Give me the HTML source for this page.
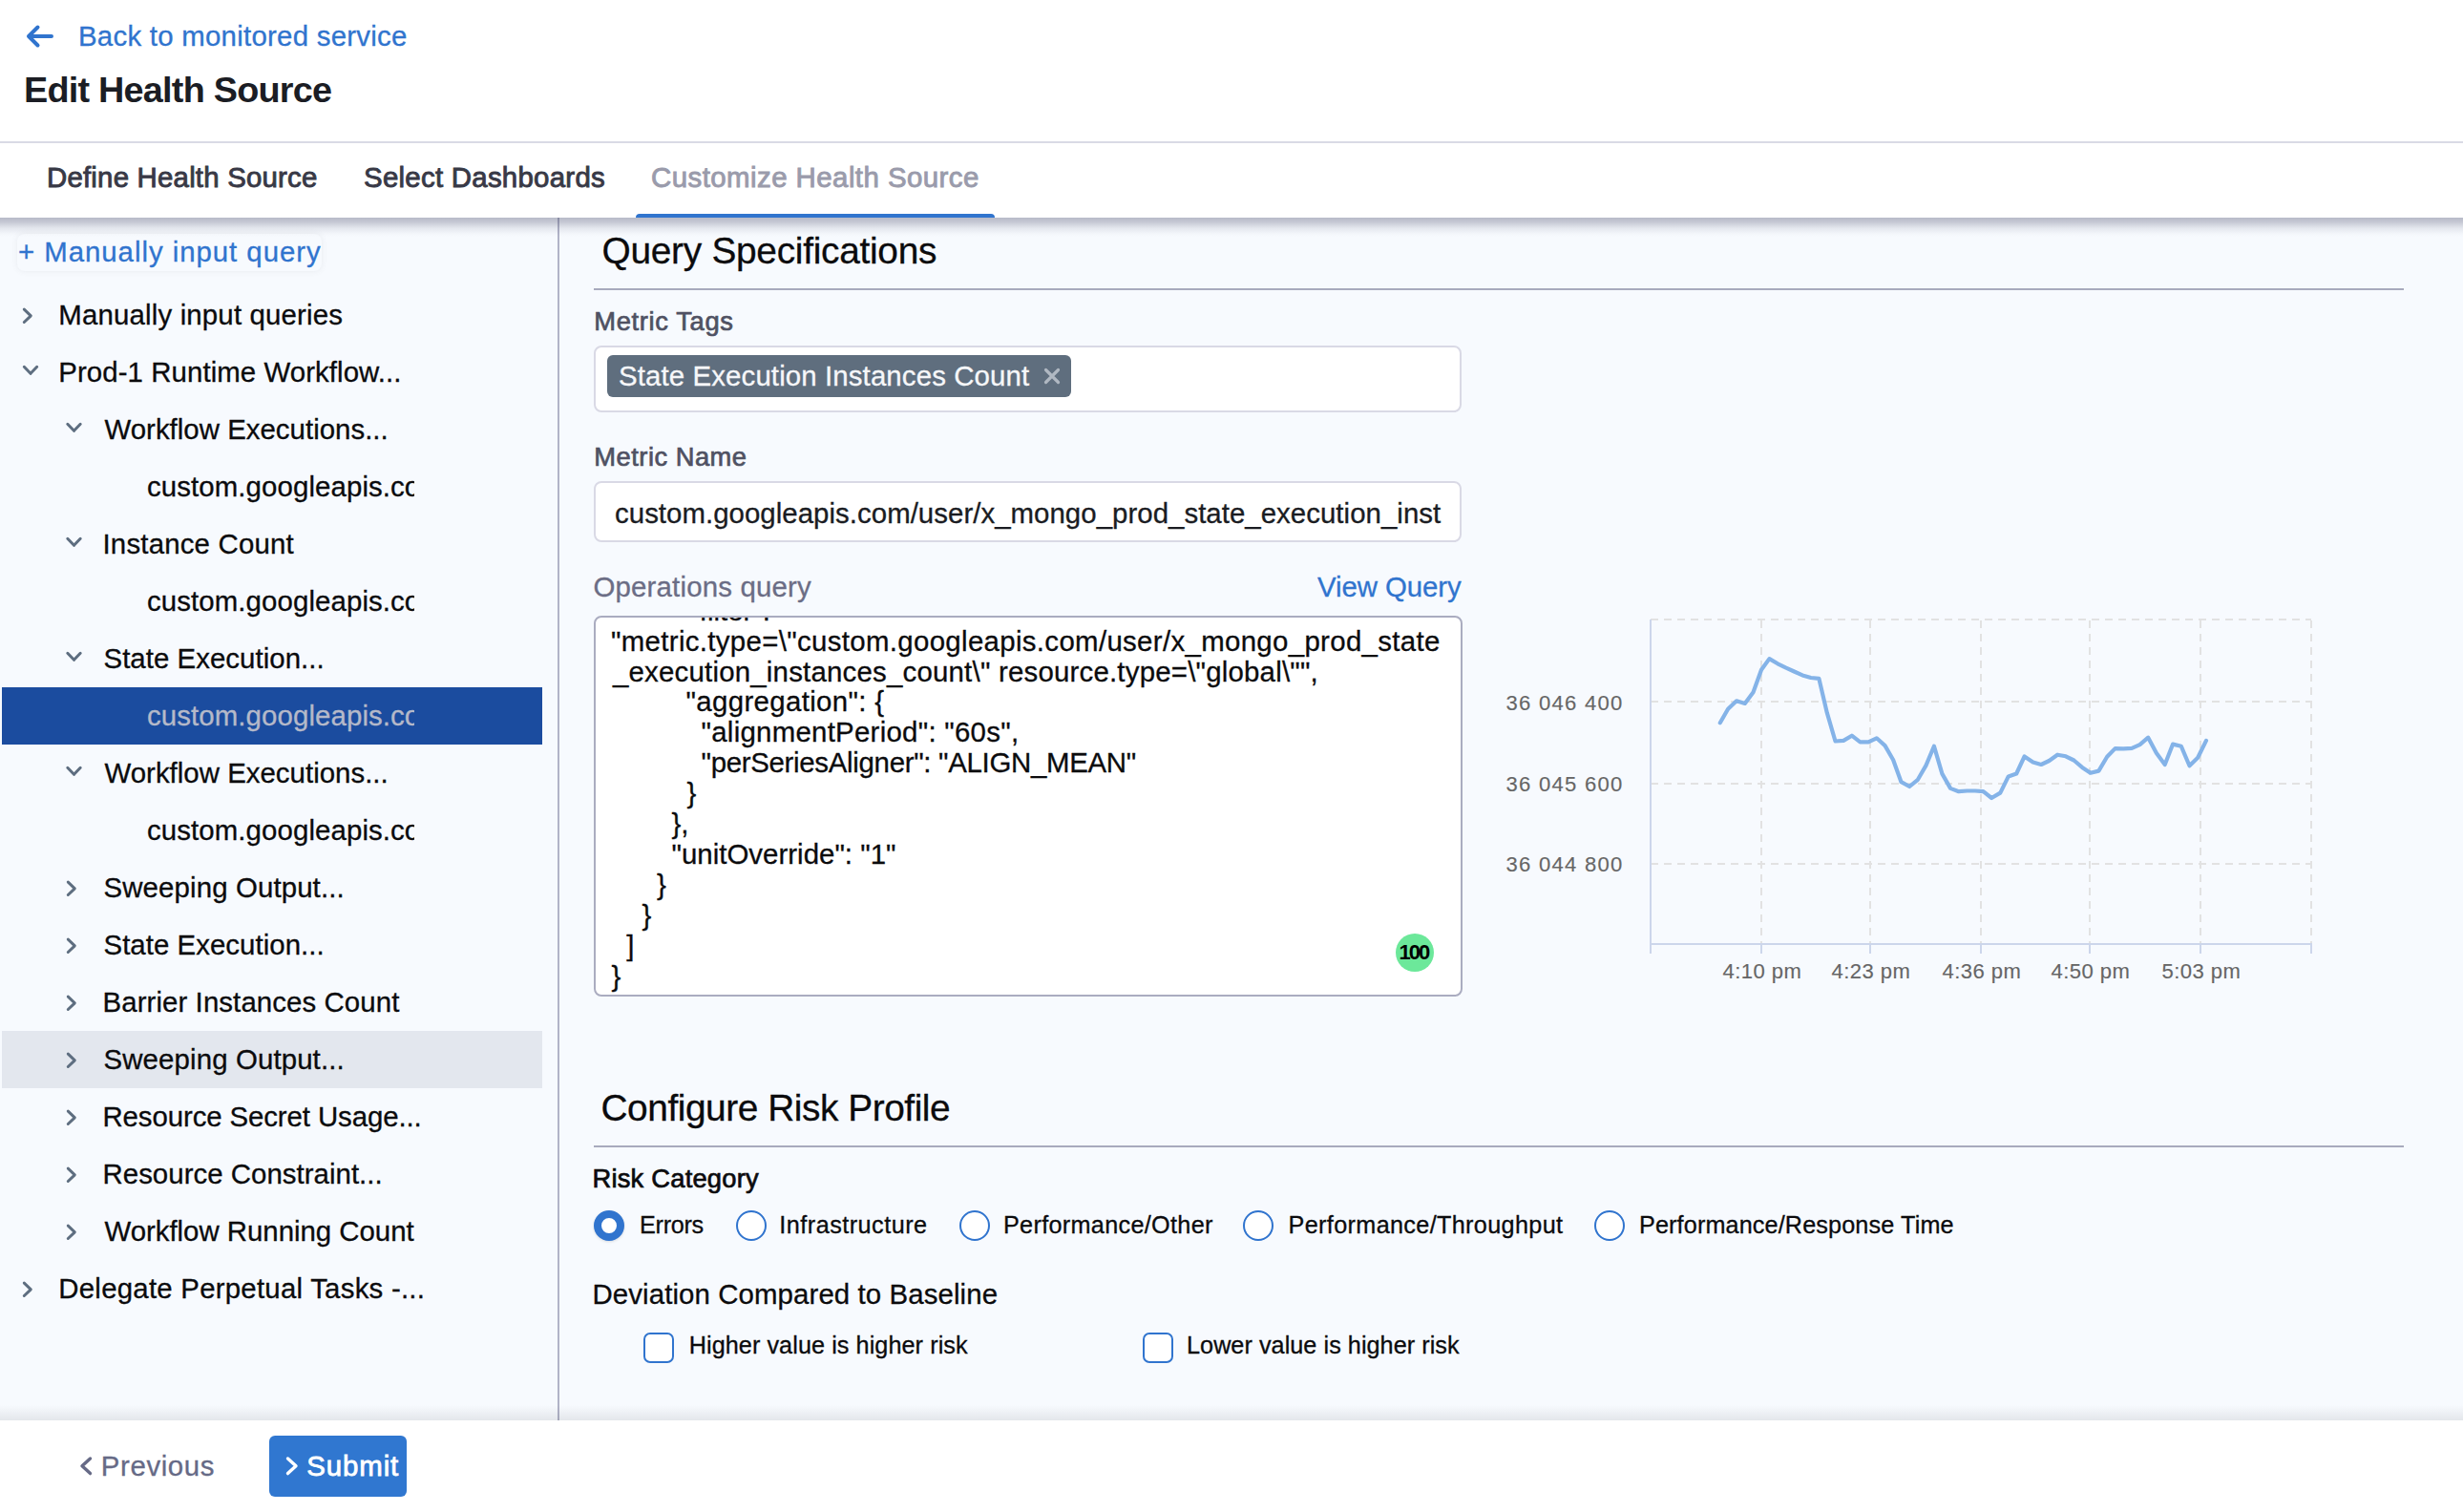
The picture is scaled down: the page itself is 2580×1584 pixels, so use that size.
<!DOCTYPE html>
<html><head><meta charset="utf-8"><title>Edit Health Source</title>
<style>
html,body{margin:0;padding:0;width:2580px;height:1584px;overflow:hidden;background:#fff;}
body{position:relative;font-family:"Liberation Sans", sans-serif;}
.t{position:absolute;white-space:pre;font-family:"Liberation Sans", sans-serif;}
</style></head><body>
<div style="position:absolute;left:0px;top:0px;width:2580px;height:228px;background:#ffffff;"></div>
<div style="position:absolute;left:0px;top:228px;width:2580px;height:1260px;background:#f7fafe;"></div>
<div style="position:absolute;left:0px;top:1488px;width:2580px;height:96px;background:#ffffff;"></div>
<div style="position:absolute;left:0px;top:148px;width:2580px;height:2px;background:#d9dae5;"></div>
<div style="position:absolute;left:2px;top:720px;width:566px;height:60px;background:#1b4c9f;"></div>
<div style="position:absolute;left:2px;top:1080px;width:566px;height:60px;background:#e3e7ee;"></div>
<div style="position:absolute;left:18px;top:245px;width:319px;height:39px;border-radius:8px;box-shadow:0 0 6px rgba(96,97,112,0.10);"></div>
<div style="position:absolute;left:584px;top:228px;width:2px;height:1260px;background:#b1b3c7;"></div>
<div style="position:absolute;left:0px;top:228px;width:2580px;height:20px;background:linear-gradient(rgba(60,62,95,0.34),rgba(60,62,95,0.27) 22%,rgba(60,62,95,0.10) 55%,rgba(60,62,95,0.02) 85%,rgba(60,62,95,0));"></div>
<div style="position:absolute;left:0px;top:1472px;width:2580px;height:16px;background:linear-gradient(rgba(30,32,40,0),rgba(30,32,40,0.04) 45%,rgba(30,32,40,0.09));"></div>
<div style="position:absolute;left:666px;top:224px;width:376px;height:4px;background:#3074ce;border-radius:4px 4px 0 0;"></div>
<div style="position:absolute;left:622px;top:302px;width:1896px;height:2px;background:#a8aabd;"></div>
<div style="position:absolute;left:622px;top:1200px;width:1896px;height:2px;background:#a8aabd;"></div>
<div style="position:absolute;left:622px;top:362px;width:909px;height:69.5px;box-sizing:border-box;background:#fff;border:2px solid #d9d9e5;border-radius:8px;"></div>
<div style="position:absolute;left:636px;top:372px;width:486px;height:44px;background:#5f6e7e;border-radius:6px;"></div>
<div style="position:absolute;left:622px;top:504px;width:909px;height:63.5px;box-sizing:border-box;background:#fff;border:2px solid #d9d9e5;border-radius:8px;"></div>
<div style="position:absolute;left:622px;top:645px;width:910px;height:398.5px;box-sizing:border-box;background:#fff;border:2px solid #aaacc0;border-radius:8px;"></div>
<div style="position:absolute;left:1462px;top:978px;width:40px;height:40px;background:#6ce89a;border-radius:50%;"></div>
<div style="position:absolute;left:622px;top:1268px;width:32px;height:32px;box-sizing:border-box;border:8px solid #3074ce;background:#fff;border-radius:50%;box-shadow:0 1px 3px rgba(0,0,0,0.12);"></div>
<div style="position:absolute;left:770.6px;top:1268px;width:32.0px;height:32px;box-sizing:border-box;border:2px solid #3074ce;background:#fff;border-radius:50%;"></div>
<div style="position:absolute;left:1004.6px;top:1268px;width:31.999999999999886px;height:32px;box-sizing:border-box;border:2px solid #3074ce;background:#fff;border-radius:50%;"></div>
<div style="position:absolute;left:1302.3px;top:1268px;width:32.0px;height:32px;box-sizing:border-box;border:2px solid #3074ce;background:#fff;border-radius:50%;"></div>
<div style="position:absolute;left:1670px;top:1268px;width:32px;height:32px;box-sizing:border-box;border:2px solid #3074ce;background:#fff;border-radius:50%;"></div>
<div style="position:absolute;left:674px;top:1396px;width:32px;height:32px;box-sizing:border-box;border:2px solid #3074ce;background:#fff;border-radius:7px;"></div>
<div style="position:absolute;left:1196.6px;top:1396px;width:32.0px;height:32px;box-sizing:border-box;border:2px solid #3074ce;background:#fff;border-radius:7px;"></div>
<div style="position:absolute;left:282.2px;top:1504px;width:143.8px;height:64px;background:#3077d0;border-radius:6px;"></div>
<svg style="position:absolute;left:0;top:0" width="2580" height="1584" viewBox="0 0 2580 1584"><path d="M25.3,324.1 L32.3,330.8 L25.3,337.5" fill="none" stroke="#5e6e80" stroke-width="3.0" stroke-linecap="round" stroke-linejoin="round"/>
<path d="M25.3,384.3 L32,391.3 L38.7,384.3" fill="none" stroke="#5e6e80" stroke-width="3.0" stroke-linecap="round" stroke-linejoin="round"/>
<path d="M70.8,444.3 L77.5,451.3 L84.2,444.3" fill="none" stroke="#5e6e80" stroke-width="3.0" stroke-linecap="round" stroke-linejoin="round"/>
<path d="M70.8,564.3 L77.5,571.3 L84.2,564.3" fill="none" stroke="#5e6e80" stroke-width="3.0" stroke-linecap="round" stroke-linejoin="round"/>
<path d="M70.8,684.3 L77.5,691.3 L84.2,684.3" fill="none" stroke="#5e6e80" stroke-width="3.0" stroke-linecap="round" stroke-linejoin="round"/>
<path d="M70.8,804.3 L77.5,811.3 L84.2,804.3" fill="none" stroke="#5e6e80" stroke-width="3.0" stroke-linecap="round" stroke-linejoin="round"/>
<path d="M71.3,924.0999999999999 L78.3,930.8 L71.3,937.5" fill="none" stroke="#5e6e80" stroke-width="3.0" stroke-linecap="round" stroke-linejoin="round"/>
<path d="M71.3,984.0999999999999 L78.3,990.8 L71.3,997.5" fill="none" stroke="#5e6e80" stroke-width="3.0" stroke-linecap="round" stroke-linejoin="round"/>
<path d="M71.3,1044.1 L78.3,1050.8 L71.3,1057.5" fill="none" stroke="#5e6e80" stroke-width="3.0" stroke-linecap="round" stroke-linejoin="round"/>
<path d="M71.3,1104.1 L78.3,1110.8 L71.3,1117.5" fill="none" stroke="#5e6e80" stroke-width="3.0" stroke-linecap="round" stroke-linejoin="round"/>
<path d="M71.3,1164.1 L78.3,1170.8 L71.3,1177.5" fill="none" stroke="#5e6e80" stroke-width="3.0" stroke-linecap="round" stroke-linejoin="round"/>
<path d="M71.3,1224.1 L78.3,1230.8 L71.3,1237.5" fill="none" stroke="#5e6e80" stroke-width="3.0" stroke-linecap="round" stroke-linejoin="round"/>
<path d="M71.3,1284.1 L78.3,1290.8 L71.3,1297.5" fill="none" stroke="#5e6e80" stroke-width="3.0" stroke-linecap="round" stroke-linejoin="round"/>
<path d="M25.3,1344.1 L32.3,1350.8 L25.3,1357.5" fill="none" stroke="#5e6e80" stroke-width="3.0" stroke-linecap="round" stroke-linejoin="round"/>
<path d="M30,38 H54 M39.5,28.5 L30,38 L39.5,47.5" fill="none" stroke="#3074ce" stroke-width="4" stroke-linecap="round" stroke-linejoin="round"/>
<path d="M1095.5,387.5 L1108.5,400.5 M1108.5,387.5 L1095.5,400.5" fill="none" stroke="#b0b8c2" stroke-width="3.2" stroke-linecap="round"/>
<path d="M94.5,1528 L86,1535.8 L94.5,1543.6" fill="none" stroke="#666a86" stroke-width="3.4" stroke-linecap="round" stroke-linejoin="round"/>
<path d="M301.5,1528 L310,1535.8 L301.5,1543.6" fill="none" stroke="#ffffff" stroke-width="3.4" stroke-linecap="round" stroke-linejoin="round"/>
<line x1="1729" y1="649" x2="2421" y2="649" stroke="#e2e2e2" stroke-width="2" stroke-dasharray="8 6"/>
<line x1="1729" y1="735" x2="2421" y2="735" stroke="#e2e2e2" stroke-width="2" stroke-dasharray="8 6"/>
<line x1="1729" y1="821" x2="2421" y2="821" stroke="#e2e2e2" stroke-width="2" stroke-dasharray="8 6"/>
<line x1="1729" y1="905" x2="2421" y2="905" stroke="#e2e2e2" stroke-width="2" stroke-dasharray="8 6"/>
<line x1="1845" y1="650" x2="1845" y2="989" stroke="#e2e2e2" stroke-width="2" stroke-dasharray="8 6"/>
<line x1="1959" y1="650" x2="1959" y2="989" stroke="#e2e2e2" stroke-width="2" stroke-dasharray="8 6"/>
<line x1="2075" y1="650" x2="2075" y2="989" stroke="#e2e2e2" stroke-width="2" stroke-dasharray="8 6"/>
<line x1="2189" y1="650" x2="2189" y2="989" stroke="#e2e2e2" stroke-width="2" stroke-dasharray="8 6"/>
<line x1="2305" y1="650" x2="2305" y2="989" stroke="#e2e2e2" stroke-width="2" stroke-dasharray="8 6"/>
<line x1="2421" y1="650" x2="2421" y2="989" stroke="#e2e2e2" stroke-width="2" stroke-dasharray="8 6"/>
<line x1="1729" y1="649" x2="1729" y2="990" stroke="#ccd6eb" stroke-width="2"/>
<line x1="1728" y1="989" x2="2422" y2="989" stroke="#ccd6eb" stroke-width="2"/>
<line x1="1729" y1="989" x2="1729" y2="999" stroke="#ccd6eb" stroke-width="2"/>
<line x1="1845" y1="989" x2="1845" y2="999" stroke="#ccd6eb" stroke-width="2"/>
<line x1="1959" y1="989" x2="1959" y2="999" stroke="#ccd6eb" stroke-width="2"/>
<line x1="2075" y1="989" x2="2075" y2="999" stroke="#ccd6eb" stroke-width="2"/>
<line x1="2189" y1="989" x2="2189" y2="999" stroke="#ccd6eb" stroke-width="2"/>
<line x1="2305" y1="989" x2="2305" y2="999" stroke="#ccd6eb" stroke-width="2"/>
<line x1="2421" y1="989" x2="2421" y2="999" stroke="#ccd6eb" stroke-width="2"/>
<polyline points="1801.8,757.3 1810.1,742.8 1819,734.3 1827.8,736.9 1836.5,725.2 1845,701.8 1853.4,690.1 1862.1,695.3 1870.9,699.6 1879.4,703.5 1888.1,707.4 1896.9,710 1905.4,710.9 1913.8,746.7 1922.5,776.5 1931.1,775.9 1939.8,770.7 1948.5,777.4 1957.1,777.4 1965.8,773.3 1974.5,781.1 1983.1,796 1991.5,819.2 2000.2,824 2008.9,816.8 2017.5,801.9 2025.9,781.7 2034.4,810.6 2043.1,825.9 2051.8,829.2 2060.6,828.5 2069.1,828.5 2077.5,829.2 2086.2,836 2095.3,830.6 2103.8,813.4 2112.2,810.5 2120.6,792.5 2129.6,798.6 2138.1,801 2146.5,797 2155.2,790.7 2163.9,792.3 2172.4,796.5 2181.1,803.9 2189.8,809.7 2198.4,807.6 2207.2,792.8 2215.6,784.1 2224.4,784.3 2233.1,783.8 2241.5,780.1 2250.2,772.7 2258.9,789.1 2267.7,801 2276.1,779.6 2284.8,781.7 2293.5,802.3 2302.2,793.8 2311,775.9" fill="none" stroke="#84b3e8" stroke-width="4.2" stroke-linejoin="round" stroke-linecap="round"/></svg>
<div class="t" style="left:82.00px;top:13.79px;font-size:29.4px;line-height:47.04px;color:#3074ce;letter-spacing:0.259px;-webkit-text-stroke:0.3px #3074ce;">Back to monitored service</div>
<div class="t" style="left:25.00px;top:64.16px;font-size:37.8px;line-height:60.48px;color:#1b1d24;font-weight:700;letter-spacing:-0.766px;">Edit Health Source</div>
<div class="t" style="left:49.00px;top:161.79px;font-size:29.4px;line-height:47.04px;color:#383946;letter-spacing:0.209px;-webkit-text-stroke:0.9px #383946;">Define Health Source</div>
<div class="t" style="left:381.00px;top:161.79px;font-size:29.4px;line-height:47.04px;color:#383946;letter-spacing:0.273px;-webkit-text-stroke:0.9px #383946;">Select Dashboards</div>
<div class="t" style="left:682.00px;top:161.79px;font-size:29.4px;line-height:47.04px;color:#9a9bab;letter-spacing:0.459px;-webkit-text-stroke:0.9px #9a9bab;">Customize Health Source</div>
<div class="t" style="left:19.00px;top:239.79px;font-size:29.4px;line-height:47.04px;color:#3074ce;letter-spacing:0.960px;-webkit-text-stroke:0.3px #3074ce;">+ Manually input query</div>
<div class="t" style="left:61.30px;top:305.79px;font-size:29.4px;line-height:47.04px;color:#0b0b0d;letter-spacing:0.172px;-webkit-text-stroke:0.3px #0b0b0d;">Manually input queries</div>
<div class="t" style="left:61.30px;top:365.79px;font-size:29.4px;line-height:47.04px;color:#0b0b0d;letter-spacing:0.080px;-webkit-text-stroke:0.3px #0b0b0d;">Prod-1 Runtime Workflow...</div>
<div class="t" style="left:109.50px;top:425.79px;font-size:29.4px;line-height:47.04px;color:#0b0b0d;letter-spacing:0.021px;-webkit-text-stroke:0.3px #0b0b0d;">Workflow Executions...</div>
<div class="t" style="left:154.00px;top:485.79px;font-size:29.4px;line-height:47.04px;color:#0b0b0d;letter-spacing:0.102px;width:279.9px;overflow:hidden;-webkit-text-stroke:0.3px #0b0b0d;">custom.googleapis.com/user/x</div>
<div class="t" style="left:107.50px;top:545.79px;font-size:29.4px;line-height:47.04px;color:#0b0b0d;letter-spacing:0.190px;-webkit-text-stroke:0.3px #0b0b0d;">Instance Count</div>
<div class="t" style="left:154.00px;top:605.79px;font-size:29.4px;line-height:47.04px;color:#0b0b0d;letter-spacing:0.102px;width:279.9px;overflow:hidden;-webkit-text-stroke:0.3px #0b0b0d;">custom.googleapis.com/user/x</div>
<div class="t" style="left:108.50px;top:665.79px;font-size:29.4px;line-height:47.04px;color:#0b0b0d;letter-spacing:0.047px;-webkit-text-stroke:0.3px #0b0b0d;">State Execution...</div>
<div class="t" style="left:154.00px;top:725.79px;font-size:29.4px;line-height:47.04px;color:#b5b9c9;letter-spacing:0.102px;width:279.9px;overflow:hidden;-webkit-text-stroke:0.3px #b5b9c9;">custom.googleapis.com/user/x</div>
<div class="t" style="left:109.50px;top:785.79px;font-size:29.4px;line-height:47.04px;color:#0b0b0d;letter-spacing:0.021px;-webkit-text-stroke:0.3px #0b0b0d;">Workflow Executions...</div>
<div class="t" style="left:154.00px;top:845.79px;font-size:29.4px;line-height:47.04px;color:#0b0b0d;letter-spacing:0.102px;width:279.9px;overflow:hidden;-webkit-text-stroke:0.3px #0b0b0d;">custom.googleapis.com/user/x</div>
<div class="t" style="left:108.50px;top:905.79px;font-size:29.4px;line-height:47.04px;color:#0b0b0d;letter-spacing:0.129px;-webkit-text-stroke:0.3px #0b0b0d;">Sweeping Output...</div>
<div class="t" style="left:108.50px;top:965.79px;font-size:29.4px;line-height:47.04px;color:#0b0b0d;letter-spacing:0.047px;-webkit-text-stroke:0.3px #0b0b0d;">State Execution...</div>
<div class="t" style="left:107.50px;top:1025.79px;font-size:29.4px;line-height:47.04px;color:#0b0b0d;letter-spacing:0.096px;-webkit-text-stroke:0.3px #0b0b0d;">Barrier Instances Count</div>
<div class="t" style="left:108.50px;top:1085.79px;font-size:29.4px;line-height:47.04px;color:#0b0b0d;letter-spacing:0.129px;-webkit-text-stroke:0.3px #0b0b0d;">Sweeping Output...</div>
<div class="t" style="left:107.50px;top:1145.79px;font-size:29.4px;line-height:47.04px;color:#0b0b0d;letter-spacing:-0.102px;-webkit-text-stroke:0.3px #0b0b0d;">Resource Secret Usage...</div>
<div class="t" style="left:107.50px;top:1205.79px;font-size:29.4px;line-height:47.04px;color:#0b0b0d;letter-spacing:0.036px;-webkit-text-stroke:0.3px #0b0b0d;">Resource Constraint...</div>
<div class="t" style="left:109.50px;top:1265.79px;font-size:29.4px;line-height:47.04px;color:#0b0b0d;letter-spacing:-0.018px;-webkit-text-stroke:0.3px #0b0b0d;">Workflow Running Count</div>
<div class="t" style="left:61.30px;top:1325.79px;font-size:29.4px;line-height:47.04px;color:#0b0b0d;letter-spacing:0.243px;-webkit-text-stroke:0.3px #0b0b0d;">Delegate Perpetual Tasks -...</div>
<div class="t" style="left:630.50px;top:231.96px;font-size:38.85px;line-height:62.16px;color:#0b0b0d;letter-spacing:-0.272px;-webkit-text-stroke:0.3px #0b0b0d;">Query Specifications</div>
<div class="t" style="left:622.30px;top:314.90px;font-size:27.3px;line-height:43.68px;color:#4f5162;letter-spacing:0.660px;-webkit-text-stroke:0.7px #4f5162;">Metric Tags</div>
<div class="t" style="left:648.00px;top:369.79px;font-size:29.4px;line-height:47.04px;color:#f6f7f9;letter-spacing:0.125px;-webkit-text-stroke:0.3px #f6f7f9;">State Execution Instances Count</div>
<div class="t" style="left:622.30px;top:456.90px;font-size:27.3px;line-height:43.68px;color:#4f5162;letter-spacing:0.498px;-webkit-text-stroke:0.7px #4f5162;">Metric Name</div>
<div class="t" style="left:644.00px;top:513.79px;font-size:29.4px;line-height:47.04px;color:#1a1c22;letter-spacing:0.043px;-webkit-text-stroke:0.3px #1a1c22;">custom.googleapis.com/user/x_mongo_prod_state_execution_inst</div>
<div class="t" style="left:621.50px;top:590.79px;font-size:29.4px;line-height:47.04px;color:#6b6d85;letter-spacing:0.183px;-webkit-text-stroke:0.3px #6b6d85;">Operations query</div>
<div class="t" style="left:1380.00px;top:590.79px;font-size:29.4px;line-height:47.04px;color:#3074ce;letter-spacing:-0.075px;-webkit-text-stroke:0.3px #3074ce;">View Query</div>
<div class="t" style="left:732.80px;top:615.79px;font-size:29.4px;line-height:47.04px;color:#0b0b0d;clip-path:inset(31.2px 0 0 0);-webkit-text-stroke:0.3px #0b0b0d;">filter&quot;: </div>
<div class="t" style="left:640.00px;top:647.59px;font-size:29.4px;line-height:47.04px;color:#0b0b0d;letter-spacing:0.339px;-webkit-text-stroke:0.3px #0b0b0d;">&quot;metric.type=\&quot;custom.googleapis.com/user/x_mongo_prod_state</div>
<div class="t" style="left:642.00px;top:679.59px;font-size:29.4px;line-height:47.04px;color:#0b0b0d;letter-spacing:0.215px;-webkit-text-stroke:0.3px #0b0b0d;">_execution_instances_count\&quot; resource.type=\&quot;global\&quot;&quot;,</div>
<div class="t" style="left:718.50px;top:711.49px;font-size:29.4px;line-height:47.04px;color:#0b0b0d;letter-spacing:0.357px;-webkit-text-stroke:0.3px #0b0b0d;">&quot;aggregation&quot;: {</div>
<div class="t" style="left:734.50px;top:743.39px;font-size:29.4px;line-height:47.04px;color:#0b0b0d;letter-spacing:0.273px;-webkit-text-stroke:0.3px #0b0b0d;">&quot;alignmentPeriod&quot;: &quot;60s&quot;,</div>
<div class="t" style="left:734.50px;top:775.29px;font-size:29.4px;line-height:47.04px;color:#0b0b0d;letter-spacing:-0.296px;-webkit-text-stroke:0.3px #0b0b0d;">&quot;perSeriesAligner&quot;: &quot;ALIGN_MEAN&quot;</div>
<div class="t" style="left:719.50px;top:807.19px;font-size:29.4px;line-height:47.04px;color:#0b0b0d;-webkit-text-stroke:0.3px #0b0b0d;">}</div>
<div class="t" style="left:703.50px;top:839.09px;font-size:29.4px;line-height:47.04px;color:#0b0b0d;-webkit-text-stroke:0.3px #0b0b0d;">},</div>
<div class="t" style="left:703.50px;top:871.29px;font-size:29.4px;line-height:47.04px;color:#0b0b0d;letter-spacing:0.030px;-webkit-text-stroke:0.3px #0b0b0d;">&quot;unitOverride&quot;: &quot;1&quot;</div>
<div class="t" style="left:688.00px;top:903.19px;font-size:29.4px;line-height:47.04px;color:#0b0b0d;-webkit-text-stroke:0.3px #0b0b0d;">}</div>
<div class="t" style="left:672.40px;top:935.09px;font-size:29.4px;line-height:47.04px;color:#0b0b0d;-webkit-text-stroke:0.3px #0b0b0d;">}</div>
<div class="t" style="left:656.20px;top:966.99px;font-size:29.4px;line-height:47.04px;color:#0b0b0d;-webkit-text-stroke:0.3px #0b0b0d;">]</div>
<div class="t" style="left:640.60px;top:998.89px;font-size:29.4px;line-height:47.04px;color:#0b0b0d;-webkit-text-stroke:0.3px #0b0b0d;">}</div>
<div class="t" style="left:1577.60px;top:718.72px;font-size:22.05px;line-height:35.28px;color:#666666;letter-spacing:1.258px;-webkit-text-stroke:0.15px #666666;">36 046 400</div>
<div class="t" style="left:1577.60px;top:803.72px;font-size:22.05px;line-height:35.28px;color:#666666;letter-spacing:1.258px;-webkit-text-stroke:0.15px #666666;">36 045 600</div>
<div class="t" style="left:1577.60px;top:887.72px;font-size:22.05px;line-height:35.28px;color:#666666;letter-spacing:1.258px;-webkit-text-stroke:0.15px #666666;">36 044 800</div>
<div class="t" style="left:1804.50px;top:1000.22px;font-size:22.05px;line-height:35.28px;color:#666666;letter-spacing:0.451px;-webkit-text-stroke:0.15px #666666;">4:10 pm</div>
<div class="t" style="left:1918.50px;top:1000.22px;font-size:22.05px;line-height:35.28px;color:#666666;letter-spacing:0.451px;-webkit-text-stroke:0.15px #666666;">4:23 pm</div>
<div class="t" style="left:2034.50px;top:1000.22px;font-size:22.05px;line-height:35.28px;color:#666666;letter-spacing:0.451px;-webkit-text-stroke:0.15px #666666;">4:36 pm</div>
<div class="t" style="left:2148.50px;top:1000.22px;font-size:22.05px;line-height:35.28px;color:#666666;letter-spacing:0.451px;-webkit-text-stroke:0.15px #666666;">4:50 pm</div>
<div class="t" style="left:2264.50px;top:1000.22px;font-size:22.05px;line-height:35.28px;color:#666666;letter-spacing:0.451px;-webkit-text-stroke:0.15px #666666;">5:03 pm</div>
<div class="t" style="left:629.50px;top:1129.96px;font-size:38.85px;line-height:62.16px;color:#0b0b0d;letter-spacing:-0.447px;-webkit-text-stroke:0.3px #0b0b0d;">Configure Risk Profile</div>
<div class="t" style="left:620.50px;top:1213.20px;font-size:27.3px;line-height:43.68px;color:#0b0b0d;letter-spacing:0.227px;-webkit-text-stroke:0.7px #0b0b0d;">Risk Category</div>
<div class="t" style="left:670.00px;top:1263.11px;font-size:25.2px;line-height:40.32px;color:#0b0b0d;letter-spacing:-0.274px;-webkit-text-stroke:0.3px #0b0b0d;">Errors</div>
<div class="t" style="left:816.30px;top:1263.11px;font-size:25.2px;line-height:40.32px;color:#0b0b0d;letter-spacing:0.487px;-webkit-text-stroke:0.3px #0b0b0d;">Infrastructure</div>
<div class="t" style="left:1051.00px;top:1263.11px;font-size:25.2px;line-height:40.32px;color:#0b0b0d;letter-spacing:0.325px;-webkit-text-stroke:0.3px #0b0b0d;">Performance/Other</div>
<div class="t" style="left:1349.60px;top:1263.11px;font-size:25.2px;line-height:40.32px;color:#0b0b0d;letter-spacing:0.352px;-webkit-text-stroke:0.3px #0b0b0d;">Performance/Throughput</div>
<div class="t" style="left:1717.00px;top:1263.11px;font-size:25.2px;line-height:40.32px;color:#0b0b0d;letter-spacing:0.140px;-webkit-text-stroke:0.3px #0b0b0d;">Performance/Response Time</div>
<div class="t" style="left:620.50px;top:1331.79px;font-size:29.4px;line-height:47.04px;color:#0b0b0d;letter-spacing:0.105px;-webkit-text-stroke:0.3px #0b0b0d;">Deviation Compared to Baseline</div>
<div class="t" style="left:721.70px;top:1388.61px;font-size:25.2px;line-height:40.32px;color:#0b0b0d;letter-spacing:0.081px;-webkit-text-stroke:0.3px #0b0b0d;">Higher value is higher risk</div>
<div class="t" style="left:1243.00px;top:1388.61px;font-size:25.2px;line-height:40.32px;color:#0b0b0d;letter-spacing:0.056px;-webkit-text-stroke:0.3px #0b0b0d;">Lower value is higher risk</div>
<div class="t" style="left:105.80px;top:1511.79px;font-size:29.4px;line-height:47.04px;color:#666a86;letter-spacing:0.621px;-webkit-text-stroke:0.3px #666a86;">Previous</div>
<div class="t" style="left:321.30px;top:1511.79px;font-size:29.4px;line-height:47.04px;color:#ffffff;letter-spacing:0.899px;-webkit-text-stroke:0.8px #ffffff;">Submit</div>
<div class="t" style="left:1465.40px;top:980.02px;font-size:22.05px;line-height:35.28px;color:#000000;font-weight:700;letter-spacing:-1.961px;">100</div>
</body></html>
